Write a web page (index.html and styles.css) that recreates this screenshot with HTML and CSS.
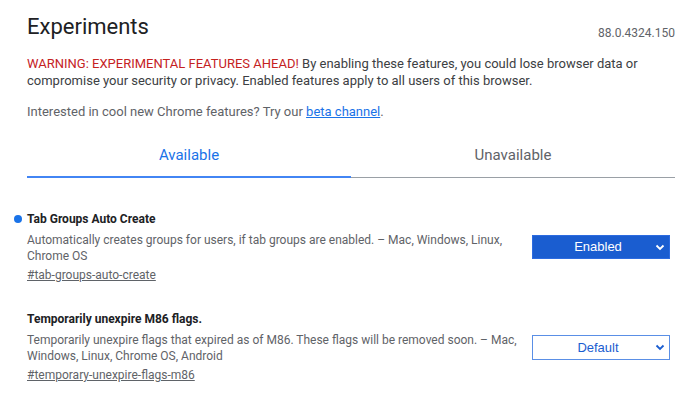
FILE: index.html
```html
<!DOCTYPE html>
<html>
<head>
<meta charset="utf-8">
<link rel="stylesheet" href="styles.css">
</head>
<body>
<div class="page">
  <header class="header">
    <h1 class="title">Experiments</h1>
    <span class="version">88.0.4324.150</span>
  </header>
  <p class="warning"><span class="warn-red">WARNING: EXPERIMENTAL FEATURES AHEAD!</span> By enabling these features, you could lose browser data or compromise your security or privacy. Enabled features apply to all users of this browser.</p>
  <p class="promo">Interested in cool new Chrome features? Try our <a class="promo-link" href="#">beta channel</a>.</p>
  <nav class="tabs">
    <div class="tab tab-active">Available</div>
    <div class="tab">Unavailable</div>
  </nav>
  <div class="experiment">
    <div class="exp-text">
      <h2 class="exp-name"><span class="dot"></span>Tab Groups Auto Create</h2>
      <p class="exp-desc">Automatically creates groups for users, if tab groups are enabled. – Mac, Windows, Linux, Chrome OS</p>
      <a class="exp-link" href="#">#tab-groups-auto-create</a>
    </div>
    <div class="select-wrap">
      <div class="select select-enabled">Enabled</div>
      <svg class="chev" width="10" height="7" viewBox="0 0 10 7"><path d="M1.5 1.5 L5 5 L8.5 1.5" fill="none" stroke="currentColor" stroke-width="1.8"/></svg>
    </div>
  </div>
  <div class="experiment">
    <div class="exp-text">
      <h2 class="exp-name">Temporarily unexpire M86 flags.</h2>
      <p class="exp-desc">Temporarily unexpire flags that expired as of M86. These flags will be removed soon. – Mac, Windows, Linux, Chrome OS, Android</p>
      <a class="exp-link" href="#">#temporary-unexpire-flags-m86</a>
    </div>
    <div class="select-wrap">
      <div class="select select-default">Default</div>
      <svg class="chev chev-blue" width="10" height="7" viewBox="0 0 10 7"><path d="M1.5 1.5 L5 5 L8.5 1.5" fill="none" stroke="currentColor" stroke-width="1.8"/></svg>
    </div>
  </div>
</div>
</body>
</html>
```
FILE: styles.css
```css
html, body {
  margin: 0;
  padding: 0;
  background: #ffffff;
}
body {
  font-family: Roboto, "Liberation Sans", sans-serif;
  color: #202124;
}
.page {
  width: 648px;
  padding: 0 25px 0 27px;
}
.header {
  display: flex;
  justify-content: space-between;
  align-items: baseline;
  padding-top: 12px;
}
.title {
  margin: 0;
  font-size: 22px;
  font-weight: 400;
  line-height: 30px;
  color: #202124;
}
.version {
  font-size: 12px;
  color: #5f6368;
  position: relative;
  top: 3px;
}
.warning {
  margin: 13px 0 0;
  font-size: 13px;
  line-height: 17px;
  color: #3c4043;
}
.warn-red {
  color: #c5221f;
}
.promo {
  margin: 14px 0 0;
  font-size: 13px;
  line-height: 17px;
  color: #5f6368;
}
.promo-link {
  color: #1a73e8;
  text-decoration: underline;
}
.tabs {
  display: flex;
  margin-top: 25px;
}
.tab {
  flex: 1;
  text-align: center;
  font-size: 15px;
  line-height: 20px;
  color: #5f6368;
  padding-bottom: 12px;
  border-bottom: 1px solid #9aa0a6;
}
.tab-active {
  color: #1a73e8;
  border-bottom: 2px solid #4285f4;
  padding-bottom: 11px;
}
.experiment {
  display: flex;
  align-items: center;
  margin-top: 33px;
}
.experiment + .experiment {
  margin-top: 28px;
}
.exp-text {
  width: 497px;
}
.exp-name {
  position: relative;
  margin: 0 0 5px;
  font-size: 12px;
  line-height: 16px;
  font-weight: 700;
  color: #202124;
}
.dot {
  position: absolute;
  left: -13px;
  top: 4px;
  width: 8px;
  height: 8px;
  border-radius: 50%;
  background: #1a73e8;
}
.exp-desc {
  margin: 0;
  font-size: 12px;
  line-height: 16px;
  color: #5f6368;
}
.exp-link {
  display: inline-block;
  margin-top: 1px;
  font-size: 12px;
  line-height: 16px;
  color: #5f6368;
  text-decoration: underline;
}
.select-wrap {
  position: relative;
  margin-left: 8px;
}
.select {
  box-sizing: border-box;
  width: 138px;
  height: 24px;
  font-family: "Liberation Sans", Arial, sans-serif;
  font-size: 13px;
  line-height: 22px;
  text-align: center;
  padding-right: 6px;
}
.select-enabled {
  background: #1a5dd0;
  color: #ffffff;
  border: 1px solid #2c6be0;
}
.select-default {
  height: 25px;
  background: #ffffff;
  color: #1a5dd0;
  border: 1px solid #5a8fe6;
  line-height: 23px;
}
.chev {
  position: absolute;
  right: 5px;
  top: 9px;
  color: #ffffff;
}
.chev-blue {
  color: #1a5dd0;
}
```
